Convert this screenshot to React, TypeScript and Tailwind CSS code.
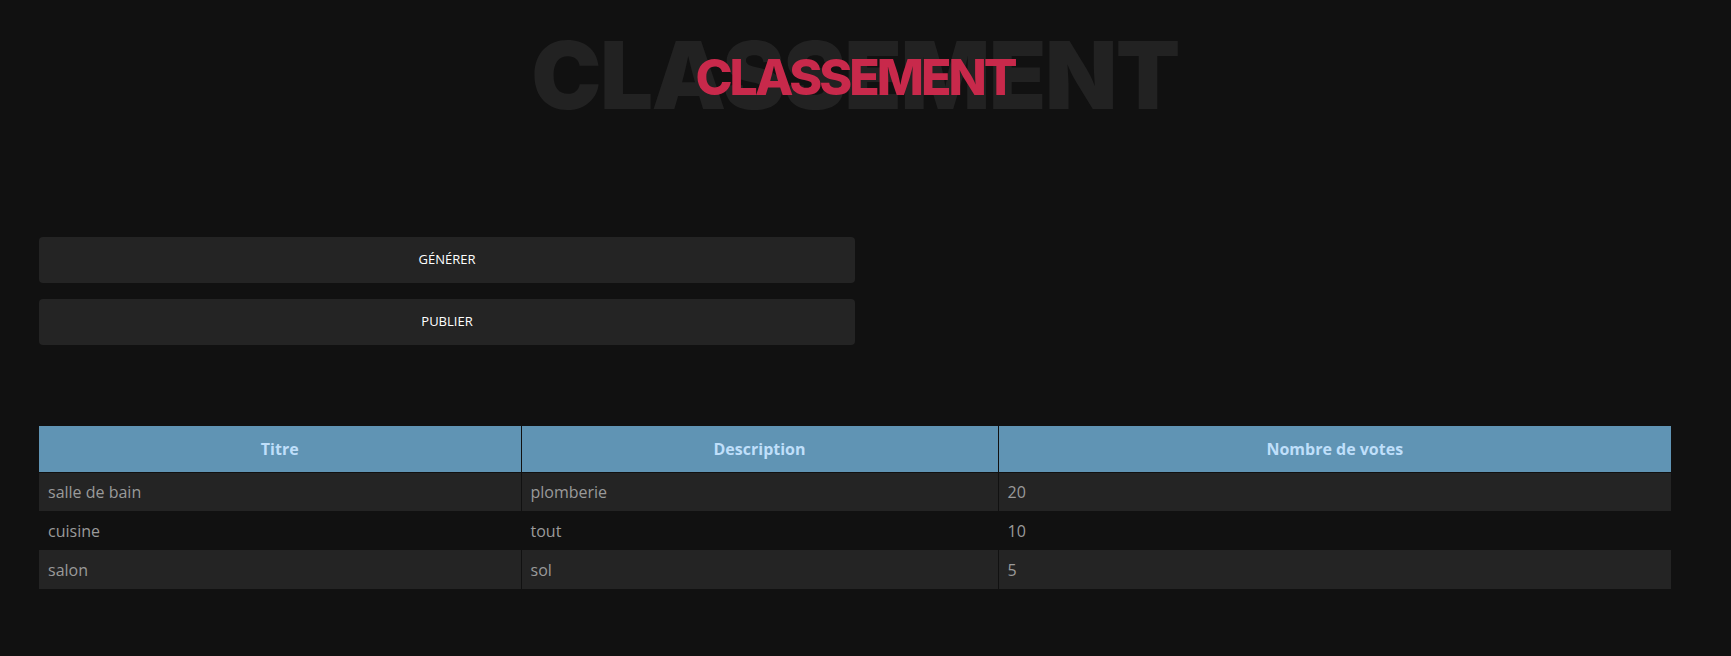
export default function App() {
  const rows = [
    { titre: "salle de bain", description: "plomberie", votes: 20 },
    { titre: "cuisine", description: "tout", votes: 10 },
    { titre: "salon", description: "sol", votes: 5 },
  ];

  return (
    <main className="min-h-screen bg-[#111111] font-['Open_Sans',sans-serif]">
      <div className="w-[1710px] px-[39px]">
        {/* Title with shadow word behind */}
        <div className="relative h-[150px] flex items-center justify-center">
          <span className="font-['Inter',sans-serif] font-black text-[94px] leading-none tracking-[-1.5px] text-[#222222] select-none">
            CLASSEMENT
          </span>
          <h1 className="absolute inset-0 pt-[3px] flex items-center justify-center font-['Inter',sans-serif] font-extrabold text-[50px] leading-none tracking-[-3px] text-[#c8294b]">
            CLASSEMENT
          </h1>
        </div>

        <div className="mt-[87px] w-[816px] flex flex-col gap-4">
          <button className="h-[46px] w-full rounded bg-[#242424] text-[13px] uppercase text-white">
            Générer
          </button>
          <button className="h-[46px] w-full rounded bg-[#242424] text-[13px] uppercase text-white">
            Publier
          </button>
        </div>

        <table className="mt-[81px] w-full border-collapse table-fixed">
          <thead>
            <tr className="h-[46px] bg-[#6094b4] text-[16px] font-semibold text-[#bfdffa]">
              <th className="w-[482px] border-r border-b border-[#111111] text-center">Titre</th>
              <th className="w-[477px] border-r border-b border-[#111111] text-center">Description</th>
              <th className="border-b border-[#111111] text-center">Nombre de votes</th>
            </tr>
          </thead>
          <tbody>
            {rows.map((r, i) => (
              <tr key={r.titre} className={(i % 2 === 0 ? "bg-[#242424]" : "bg-[#111111]") + " h-[39px] text-[16px] text-[#9a9a9a]"}>
                <td className="px-[9px] border-r border-[#111111]">{r.titre}</td>
                <td className="px-[9px] border-r border-[#111111]">{r.description}</td>
                <td className="px-[9px]">{r.votes}</td>
              </tr>
            ))}
          </tbody>
        </table>
      </div>
    </main>
  );
}
